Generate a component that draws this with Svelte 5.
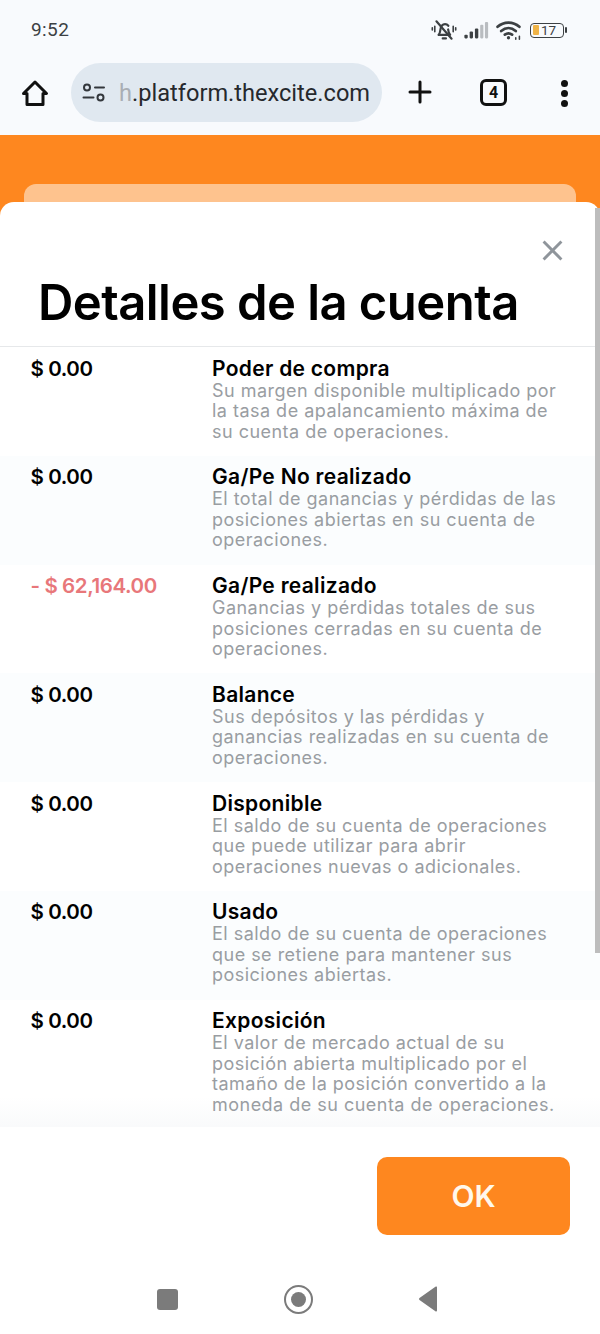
<script>
  const rows = [
    { value: '$ 0.00', title: 'Poder de compra', lines: ['Su margen disponible multiplicado por', 'la tasa de apalancamiento máxima de', 'su cuenta de operaciones.'] },
    { value: '$ 0.00', title: 'Ga/Pe No realizado', lines: ['El total de ganancias y pérdidas de las', 'posiciones abiertas en su cuenta de', 'operaciones.'] },
    { value: '- $ 62,164.00', loss: true, title: 'Ga/Pe realizado', lines: ['Ganancias y pérdidas totales de sus', 'posiciones cerradas en su cuenta de', 'operaciones.'] },
    { value: '$ 0.00', title: 'Balance', lines: ['Sus depósitos y las pérdidas y', 'ganancias realizadas en su cuenta de', 'operaciones.'] },
    { value: '$ 0.00', title: 'Disponible', lines: ['El saldo de su cuenta de operaciones', 'que puede utilizar para abrir', 'operaciones nuevas o adicionales.'] },
    { value: '$ 0.00', title: 'Usado', lines: ['El saldo de su cuenta de operaciones', 'que se retiene para mantener sus', 'posiciones abiertas.'] },
    { value: '$ 0.00', title: 'Exposición', lines: ['El valor de mercado actual de su', 'posición abierta multiplicado por el', 'tamaño de la posición convertido a la', 'moneda de su cuenta de operaciones.'] }
  ];
</script>

<div class="phone">
  <div class="status">
    <span class="time">9:52</span>
    <div class="status-icons">
      <svg width="26" height="24" viewBox="0 0 24 22" fill="none" stroke="#3c4043" stroke-width="2" stroke-linecap="round" stroke-linejoin="round">
        <path d="M7 15.500c1.200-1.200 1.400-2.600 1.600-4.400C9 8 10.400 5.600 13 5.600c1.300 0 2.300.6 3 1.500" />
        <path d="M15.800 10.500c.2 2 .6 3.800 1.900 5H8" />
        <path d="M5 3l14 16" />
        <path d="M10.800 18.800h3" />
        <path d="M3.500 7.500v5M1.200 9v2M20.500 7.500v5M22.800 9v2" stroke-width="1.500" />
      </svg>
      <svg class="signal" width="25" height="19" viewBox="0 0 23 18">
        <rect x="0" y="13" width="3.200" height="3.500" rx="1" fill="#3c4043" />
        <rect x="5" y="10" width="3.200" height="6.500" rx="1" fill="#3c4043" />
        <rect x="10" y="7" width="3.200" height="9.500" rx="1" fill="#3c4043" />
        <rect x="15" y="3.500" width="3" height="13" rx="1" fill="#b9bcc0" />
        <rect x="19.500" y="1" width="3" height="15.500" rx="1" fill="#b9bcc0" />
      </svg>
      <svg class="wifi" width="26" height="21" viewBox="0 0 25 20" fill="none" stroke="#3c4043" stroke-width="2.600" stroke-linecap="round">
        <path d="M1.500 6.500C7.500 1 16.500 1 22.500 6.500" />
        <path d="M5 10.500c4.300-3.600 9.700-3.600 14 0" />
        <path d="M8.500 14c2.400-1.800 4.600-1.800 7 0" />
        <circle cx="12" cy="17" r="1.600" fill="#3c4043" stroke="none" />
        <path d="M19 17v1.500M22.500 15.500v3" stroke-width="1.500" />
      </svg>
      <div class="battery">
        <span class="charge"></span><span class="level">17</span>
      </div>
      <span class="nub"></span>
    </div>
  </div>

  <div class="toolbar">
    <svg class="home" width="28" height="28" viewBox="0 0 28 28" fill="none" stroke="#111" stroke-width="3" stroke-linejoin="round" stroke-linecap="round">
      <path d="M2.500 14.500L14 3l11.500 11.500H22V25.500H6V14.500Z" />
    </svg>
    <div class="omnibox">
      <svg width="24" height="20" viewBox="0 0 24 20" fill="none" stroke="#33373c" stroke-width="2" stroke-linecap="round">
        <circle cx="5" cy="4.500" r="3" />
        <path d="M13 4.500h9M1.500 14.500h10" />
        <circle cx="18.500" cy="14.500" r="3" />
      </svg>
      <span class="url"><span class="fade">h</span>.platform.thexcite.com</span>
    </div>
    <svg class="plus" width="24" height="24" viewBox="0 0 24 24" stroke="#111" stroke-width="3" stroke-linecap="round">
      <path d="M12 2v20M2 12h20" />
    </svg>
    <div class="tabs">4</div>
    <div class="dots"><i></i><i></i><i></i></div>
  </div>

  <main class="page">
    <div class="behind"></div>
    <section class="modal">
      <span class="scrollbar"></span>
      <svg class="close" width="21" height="21" viewBox="0 0 20 20" stroke="#8f959b" stroke-width="2.800">
        <path d="M1.500 1.500l17 17M18.500 1.500l-17 17" />
      </svg>
      <h1>Detalles de la cuenta</h1>
      <div class="list">
        <div class="list-fade"></div>
        {#each rows as row, i}
          <div class="row" class:tinted={i % 2 === 1}>
            <div class="value" class:loss={row.loss}>{row.value}</div>
            <div class="info">
              <div class="title">{row.title}</div>
              {#each row.lines as line}
                <div class="line">{line}</div>
              {/each}
            </div>
          </div>
        {/each}
      </div>
      <div class="actions"><button>OK</button></div>
    </section>
  </main>

  <nav class="system">
    <span class="square"></span>
    <span class="ring"><span></span></span>
    <svg width="22" height="26" viewBox="0 0 22 26"><path d="M20 1.500v23a1 1 0 0 1-1.600.8L2.500 14a1.300 1.300 0 0 1 0-2L18.400.7A1 1 0 0 1 20 1.500Z" fill="#7b7b7b" /></svg>
  </nav>
</div>

<style>
  :global(body) {
    margin: 0;
    background: #fff;
  }
  .phone {
    width: 600px;
    height: 1334px;
    display: flex;
    flex-direction: column;
    overflow: hidden;
    font-family: Inter, "Noto Sans", sans-serif;
    color: #000;
    position: relative;
  }
  .status {
    height: 62px;
    box-sizing: border-box;
    padding: 19px 33px 0 31px;
    display: flex;
    justify-content: space-between;
    background: #f8fafd;
  }
  .time {
    font-family: Roboto, sans-serif;
    font-size: 19px;
    line-height: 22px;
    color: #3c4043;
    letter-spacing: 0.4px;
  }
  .status-icons {
    display: flex;
    align-items: center;
    height: 22px;
    gap: 6px;
  }
  .signal { margin-left: 1px; }
  .wifi { margin-left: 1px; }
  .battery {
    width: 34px;
    height: 15px;
    box-sizing: border-box;
    border: 1.500px solid #3c4043;
    border-radius: 4px;
    display: flex;
    align-items: center;
    padding-left: 2px;
    margin-left: 2px;
  }
  .charge {
    width: 6px;
    height: 10px;
    background: #efb347;
    border-radius: 1px;
  }
  .level {
    font-family: Roboto, sans-serif;
    font-size: 13.500px;
    color: #3c4043;
    margin-left: 2px;
    line-height: 13px;
  }
  .nub {
    width: 2px;
    height: 6px;
    background: #3c4043;
    border-radius: 1px;
    margin-left: -5px;
  }
  .toolbar {
    height: 73px;
    background: #f8fafd;
    display: flex;
    align-items: flex-start;
    position: relative;
  }
  .home { margin: 17px 0 0 21px; }
  .omnibox {
    width: 311px;
    height: 59px;
    margin: 1px 0 0 22px;
    background: #e0e8f0;
    border-radius: 30px;
    display: flex;
    align-items: center;
    box-sizing: border-box;
    padding-left: 11px;
  }
  .url {
    font-family: Roboto, sans-serif;
    font-size: 23.600px;
    margin-left: 13px;
    color: #26292d;
    white-space: nowrap;
  }
  .fade { color: #a9aeb4; }
  .plus { margin: 18px 0 0 26px; }
  .tabs {
    width: 27px;
    height: 27px;
    box-sizing: border-box;
    margin: 17px 0 0 48px;
    border: 3px solid #111;
    border-radius: 6px;
    display: flex;
    align-items: center;
    justify-content: center;
    font-family: Roboto, sans-serif;
    font-weight: 700;
    font-size: 16px;
    color: #111;
  }
  .dots {
    margin: 18px 0 0 54px;
    display: flex;
    flex-direction: column;
    gap: 3px;
  }
  .dots i {
    width: 7px;
    height: 7px;
    border-radius: 50%;
    background: #111;
    display: block;
  }
  .page {
    flex: 1;
    position: relative;
    background: #fe871f;
    min-height: 0;
  }
  .behind {
    margin: 49px 24px 0;
    height: 60px;
    border-radius: 12px;
    background: #fec38e;
  }
  .modal {
    position: absolute;
    inset: 67px 0 0 0;
    background: #fff;
    border-radius: 14px 14px 0 0;
    display: flex;
    flex-direction: column;
  }
  .scrollbar {
    position: absolute;
    right: 0;
    top: 6px;
    width: 5px;
    height: 745px;
    background: #bdbdbd;
    z-index: 1;
  }
  .close {
    position: absolute;
    right: 37px;
    top: 38px;
  }
  h1 {
    margin: 0;
    height: 145px;
    box-sizing: border-box;
    padding: 72px 0 0 38px;
    font-size: 49px;
    line-height: 58px;
    font-weight: 600;
    letter-spacing: -0.550px;
    white-space: nowrap;
    border-bottom: 1px solid #e6e8ea;
  }
  .list {
    height: 780px;
    overflow: hidden;
    position: relative;
  }
  .row {
    height: 108.800px;
    box-sizing: border-box;
    padding: 9.500px 30px 0 30.500px;
    display: flex;
    position: relative;
  }
  .tinted { background: #fbfdfe; }
  .value {
    width: 181.500px;
    flex: none;
    font-size: 20.500px;
    line-height: 24px;
    font-weight: 600;
    letter-spacing: -0.400px;
    white-space: nowrap;
  }
  .loss { color: #e8777a; }
  .title {
    font-size: 21px;
    line-height: 24px;
    font-weight: 600;
    letter-spacing: 0.300px;
  }
  .line {
    font-size: 18px;
    line-height: 20.500px;
    letter-spacing: 0.480px;
    color: #999da2;
    white-space: nowrap;
  }
  .list-fade {
    position: absolute;
    left: 0;
    right: 0;
    bottom: 0;
    height: 30px;
    background: linear-gradient(to bottom, rgba(249, 250, 251, 0), #f9fafb);
  }
  .actions {
    display: flex;
    justify-content: flex-end;
    padding: 30px 30px 0 0;
  }
  button {
    width: 193px;
    height: 78px;
    border: 0;
    border-radius: 10px;
    background: #fe871f;
    color: #fff8ec;
    font-family: Inter, sans-serif;
    font-size: 30px;
    font-weight: 600;
  }
  .system {
    position: absolute;
    left: 0;
    top: 1270px;
    width: 600px;
    height: 58px;
    display: flex;
    align-items: center;
  }
  .square {
    margin-left: 157px;
    width: 21px;
    height: 21px;
    border-radius: 3px;
    background: #7b7b7b;
  }
  .ring {
    margin-left: 106px;
    width: 29px;
    height: 29px;
    box-sizing: border-box;
    border: 2.500px solid #7b7b7b;
    border-radius: 50%;
    display: flex;
    align-items: center;
    justify-content: center;
  }
  .ring span {
    width: 15px;
    height: 15px;
    border-radius: 50%;
    background: #7b7b7b;
  }
  .system svg { margin-left: 104px; }
</style>
